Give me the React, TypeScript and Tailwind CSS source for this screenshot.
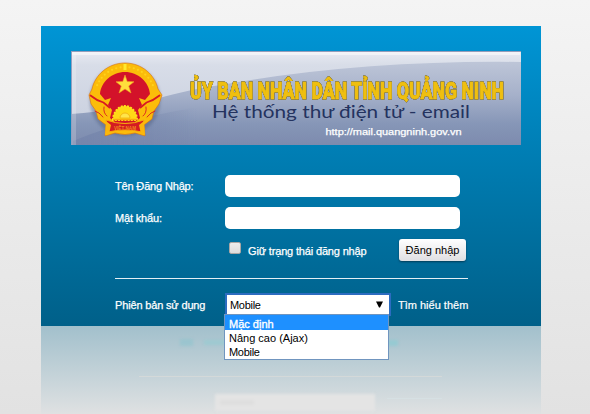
import React from "react";

function Emblem() {
  const beads = Array.from({ length: 17 }, (_, i) => 202 + (i * 136) / 16);
  return (
    <g>
      <ellipse cx="54" cy="49" rx="35.500" ry="36" fill="#4a5878" opacity=".4" filter="url(#soft)" />
      <path
        d="M54 12C37 12 24 24 21 38L18 44L20 53L25 60L27 68L35 74L34 85L44 82Q54 85 64 82L74 85L73 74L81 68L83 60L88 53L91 44L87 38C84 24 71 12 54 12Z"
        fill="#fbbc0a"
        stroke="#d86f12"
        strokeWidth=".6"
      />
      <path
        d="M54 21C41 21 30 31 29 43L34 49L40 47L37 54L41 59L39 67L45 72L63 72L69 67L67 59L71 54L68 47L74 49L79 43C78 31 67 21 54 21Z"
        fill="#d3122a"
      />
      {beads.map((a) => {
        const r = (a * Math.PI) / 180;
        return (
          <circle key={a} cx={54 + 30 * Math.cos(r)} cy={45 + 29 * Math.sin(r)} r="1.100" fill="#ffd21a" />
        );
      })}
      <path d="M52.500 13h3v6h-3z" fill="#ffe92c" />
      <path
        d="M54 24L56.200 30.500L63 30.800L57.700 35L60 42L54 38L48 42L50.300 35L45 30.800L51.800 30.500Z"
        fill="#ffdf3c"
        stroke="#f0a020"
        strokeWidth=".6"
      />
      <path
        d="M42 69A12 14 0 0 1 66 69Z"
        fill="#ffd816"
        stroke="#ffe019"
        strokeWidth="2"
        strokeDasharray="2 1.200"
      />
      <path d="M42 68.500H66" stroke="#f9a90d" strokeWidth="1.500" />
      <path d="M49 67a5 5 0 0 1 10 0z" fill="#ffe54a" stroke="#eea60b" strokeWidth=".7" />
      <g fill="none" stroke="#d81824" strokeWidth="1.800" strokeLinecap="round">
        <path d="M19.500 44.500q6 5 13 7l6 5" />
        <path d="M88.500 44.500q-6 5-13 7l-6 5" />
        <path d="M24 60q4 1 8 6M84 60q-4 1-8 6" strokeWidth=".9" />
        <path d="M33 56q-1 6 3 9M75 56q1 6-3 9" strokeWidth=".9" />
      </g>
      <path d="M35 69Q54 76 73 69L71 81Q54 77 37 81Z" fill="#d41b22" stroke="#f6ab0d" strokeWidth="1" />
      <path d="M35 70l5 4-2 9-4 1zM73 70l-5 4 2 9 4 1z" fill="#fbb70c" />
      <text
        x="43"
        y="79"
        fontSize="5.500"
        fontWeight="700"
        fill="#f2871c"
        textLength="22"
        lengthAdjust="spacingAndGlyphs"
        className="font-['Liberation_Sans',sans-serif]"
      >
        VIỆT NAM
      </text>
    </g>
  );
}

function Banner() {
  return (
    <svg width="450" height="94" viewBox="0 0 450 94" className="block">
      <defs>
        <linearGradient id="sky" x1="0" y1="0" x2="0" y2="1">
          <stop offset="0" stopColor="#e8ebf2" />
          <stop offset=".15" stopColor="#d8dde8" />
          <stop offset="1" stopColor="#c5ccdc" />
        </linearGradient>
        <linearGradient id="hill" x1="0" y1="10" x2="0" y2="94" gradientUnits="userSpaceOnUse">
          <stop offset="0" stopColor="#bec6d8" />
          <stop offset=".4" stopColor="#a6b1ca" />
          <stop offset=".75" stopColor="#8696b7" />
          <stop offset="1" stopColor="#7d8bae" />
        </linearGradient>
        <linearGradient id="fade" x1="0" y1="0" x2="1" y2="0">
          <stop offset="0" stopColor="#7383aa" stopOpacity=".75" />
          <stop offset=".3" stopColor="#7383aa" stopOpacity=".4" />
          <stop offset=".5" stopColor="#7383aa" stopOpacity="0" />
        </linearGradient>
        <linearGradient id="edge" x1="0" y1="0" x2="0" y2="1">
          <stop offset="0" stopColor="#9aa1ba" />
          <stop offset="1" stopColor="#45537c" />
        </linearGradient>
        <filter id="soft">
          <feGaussianBlur stdDeviation="1.5" />
        </filter>
        <filter id="slight">
          <feGaussianBlur stdDeviation=".7" />
        </filter>
      </defs>
      <rect width="450" height="94" fill="url(#sky)" />
      <path d="M0 63C70 58 90 42 150 34Q290 9 450 11V94H0Z" fill="url(#hill)" filter="url(#slight)" />
      <path d="M2 90Q60 66 130 56Q190 50 250 50V94H2Z" fill="url(#fade)" filter="url(#slight)" />
      <path d="M1 1H449V4H1Z" fill="#fff" opacity=".5" filter="url(#slight)" />
      <path d="M1 2H5V94H1Z" fill="#fff" opacity=".2" filter="url(#slight)" />
      <path d="M0 .5H450" stroke="#969db9" />
      <path d="M.5 0V94" stroke="#929fc0" />
      <path d="M449 1V94" stroke="url(#edge)" strokeWidth="2" />
      <Emblem />
      <text
        x="119"
        y="47.500"
        fontSize="24.500"
        fontWeight="900"
        textLength="314"
        lengthAdjust="spacingAndGlyphs"
        fill="#efbf10"
        stroke="#efbf10"
        strokeWidth=".9"
        className="font-['Roboto',sans-serif] [filter:drop-shadow(0_0_0.6px_#3f4c6c)_drop-shadow(0_0_0.7px_#3f4c6c)]"
      >
        ỦY BAN NHÂN DÂN TỈNH QUẢNG NINH
      </text>
      <text
        x="141"
        y="67"
        fontSize="17.500"
        textLength="258"
        lengthAdjust="spacingAndGlyphs"
        fill="#24335f"
        className="font-['Lato',sans-serif]"
      >
        Hệ thống thư điện tử - email
      </text>
      <text
        x="254.500"
        y="84"
        fontSize="9.500"
        textLength="136"
        lengthAdjust="spacingAndGlyphs"
        fill="#fff"
        stroke="#fff"
        strokeWidth=".25"
        className="font-['Liberation_Sans',sans-serif]"
      >
        http://mail.quangninh.gov.vn
      </text>
    </svg>
  );
}

function VersionSelect() {
  return (
    <div className="relative h-[23px] w-[166px]">
      <div className="flex h-[23px] items-center justify-between border-2 border-[#2c6cc0] bg-white pr-[6px] pl-[3px] text-black">
        <span className="pt-px tracking-[-0.3px]">Mobile</span>
        <svg width="7" height="7" viewBox="0 0 7 7">
          <path d="M0 0.500H7L4 6.500H3Z" fill="#000" />
        </svg>
      </div>
      <ul className="absolute top-[21px] -left-px z-10 h-[46px] w-[165px] border border-[#7095bf] bg-white text-black">
        <li className="h-[15px] bg-[#1e90ff] pl-1 leading-[18px] text-white [-webkit-text-stroke:0.35px_white]">
          Mặc định
        </li>
        <li className="h-[14px] pl-1 leading-[17px]">Nâng cao (Ajax)</li>
        <li className="h-[14px] pl-1 leading-[17px] tracking-[-0.3px]">Mobile</li>
      </ul>
    </div>
  );
}

export default function App() {
  const label = "text-white tracking-[-0.16px] [-webkit-text-stroke:0.25px_white]";
  return (
    <div className="h-[414px] w-[590px] overflow-hidden bg-linear-to-b from-[#f4f4f4] to-[#e2e2e2] pt-[26px] pl-[41px] font-['Liberation_Sans',Arial,sans-serif] text-[11px] leading-[13px]">
      <main className="h-[300px] w-[500px] bg-linear-to-b from-[#0095d5] to-[#006089] pt-[25px]">
        <div className="pl-[30px]">
          <Banner />
        </div>
        <form className="pt-[30px] pl-[74px]">
          <div className="flex h-[22px] items-center">
            <label className={`w-[110px] ${label}`}>Tên Đăng Nhập:</label>
            <div className="h-[22px] w-[235px] rounded-[5px] bg-white" />
          </div>
          <div className="mt-[10px] flex h-[22px] items-center">
            <label className={`w-[110px] ${label}`}>Mật khẩu:</label>
            <div className="h-[22px] w-[235px] rounded-[5px] bg-white" />
          </div>
          <div className="mt-[10px] flex h-[22px] pl-[114px]">
            <span className="mt-[3px] size-3 rounded-[2px] border border-[#aaa6a4] bg-linear-to-b from-[#ececec] to-[#dcdcdc]" />
            <span className={`mt-[6px] ml-[7px] w-[151px] whitespace-nowrap ${label}`}>
              Giữ trạng thái đăng nhập
            </span>
            <button
              type="button"
              className="h-[22px] w-[67px] rounded-[3px] bg-linear-to-b from-white to-[#dfdfe2] text-[11px] whitespace-nowrap text-black shadow-[0_1px_2px_#003c58]"
            >
              Đăng nhập
            </button>
          </div>
          <div className="mt-[17px] h-px w-[353px] bg-[#e4eff4]" />
          <div className="mt-[14px] flex items-center">
            <span className={`w-[110px] pt-[2px] ${label}`}>Phiên bản sử dụng</span>
            <VersionSelect />
            <span className="ml-[7px] pt-[2px] whitespace-nowrap text-white [-webkit-text-stroke:0.2px_white]">
              Tìm hiểu thêm
            </span>
          </div>
        </form>
      </main>
      <div className="flex h-[88px] w-[500px] flex-col bg-linear-to-b from-[#a2c0cc] to-[#dfe1e2] pt-[12px]">
        <div className="flex h-[9px] items-center pl-[139px]">
          <span className="h-[7px] w-[13px] bg-[#88c4cd]/50 blur-[1.500px]" />
          <span className="ml-[11px] h-[5px] w-[22px] bg-[#92ccd2]/60 blur-[1.500px]" />
          <span className="ml-[160px] h-[6px] w-[12px] bg-[#86cbd3]/60 blur-[1.500px]" />
        </div>
        <div className="mt-[29px] ml-[98px] h-px w-[303px] bg-[#d4d9d9] blur-[0.400px]" />
        <div className="mt-[17px] flex pl-[174px]">
          <div className="h-[17px] w-[160px] bg-[#e4e4e4] pt-[6px] pl-[5px] blur-[1.500px]">
            <div className="h-[5px] w-[34px] bg-[#dedede]" />
          </div>
          <div className="mt-[4px] ml-[12px] h-px w-[55px] bg-[#d6e0e3] blur-[0.600px]" />
        </div>
      </div>
    </div>
  );
}
